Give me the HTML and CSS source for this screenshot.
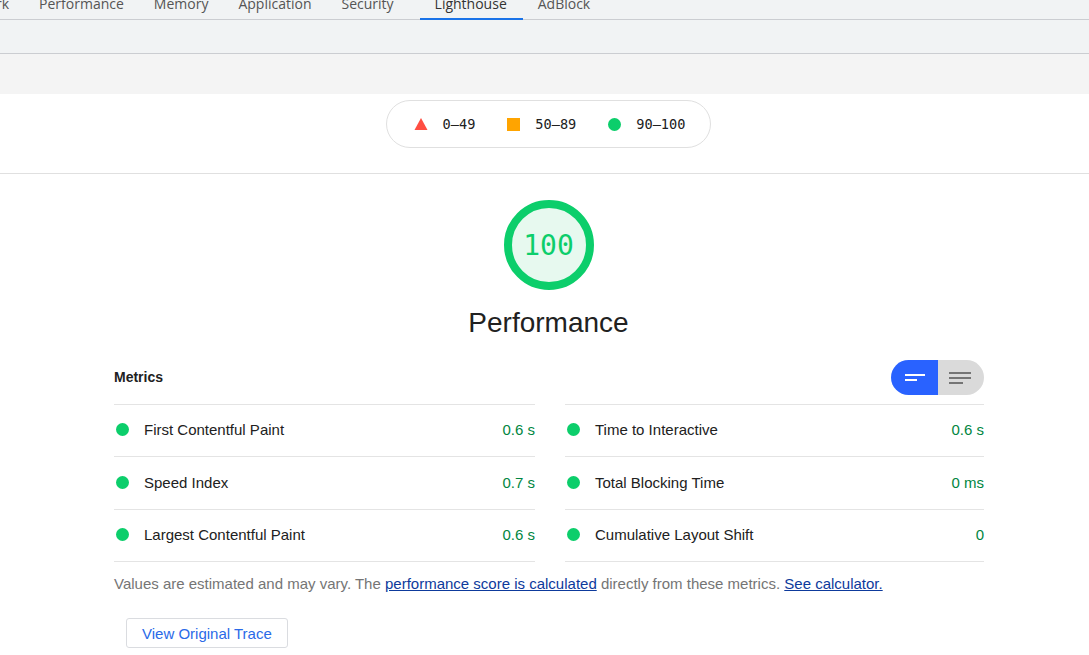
FILE: index.html
```html
<!DOCTYPE html>
<html>
<head>
<meta charset="utf-8">
<link rel="stylesheet" href="styles.css">
</head>
<body>
<div class="tabbar">
  <div class="tab tab-cut">rk</div>
  <div class="tab">Performance</div>
  <div class="tab">Memory</div>
  <div class="tab">Application</div>
  <div class="tab">Security</div>
  <div class="tab active">Lighthouse</div>
  <div class="tab">AdBlock</div>
</div>
<div class="toolbar"></div>
<div class="topgray"></div>
<div class="content">
  <div class="legend-wrap">
    <div class="legend">
      <span class="leg"><svg class="leg-icon" width="14" height="14" viewBox="0 0 14 14"><polygon points="7,1 13.5,13 0.5,13" fill="#ff4e42"/></svg><span class="leg-text">0–49</span></span>
      <span class="leg"><span class="sq"></span><span class="leg-text">50–89</span></span>
      <span class="leg"><span class="dot-big"></span><span class="leg-text">90–100</span></span>
    </div>
  </div>
  <div class="divider"></div>
  <div class="gauge-wrap">
    <div class="gauge"><span class="gauge-num">100</span></div>
    <div class="gauge-label">Performance</div>
  </div>
  <div class="metrics">
    <div class="metrics-head">
      <div class="metrics-title">Metrics</div>
      <div class="toggle">
        <div class="toggle-on">
          <svg width="22" height="12" viewBox="0 0 22 12"><rect x="1" y="2" width="20" height="2" fill="#fff"/><rect x="1" y="7" width="12" height="2" fill="#fff"/></svg>
        </div>
        <div class="toggle-off">
          <svg width="24" height="16" viewBox="0 0 24 16"><rect x="1" y="2" width="22" height="2" fill="#757575"/><rect x="1" y="7" width="22" height="2" fill="#757575"/><rect x="1" y="12" width="14" height="2" fill="#757575"/></svg>
        </div>
      </div>
    </div>
    <div class="grid">
      <div class="col">
        <div class="row"><span class="dot"></span><span class="name">First Contentful Paint</span><span class="val">0.6 s</span></div>
        <div class="row"><span class="dot"></span><span class="name">Speed Index</span><span class="val">0.7 s</span></div>
        <div class="row"><span class="dot"></span><span class="name">Largest Contentful Paint</span><span class="val">0.6 s</span></div>
      </div>
      <div class="col">
        <div class="row"><span class="dot"></span><span class="name">Time to Interactive</span><span class="val">0.6 s</span></div>
        <div class="row"><span class="dot"></span><span class="name">Total Blocking Time</span><span class="val">0 ms</span></div>
        <div class="row"><span class="dot"></span><span class="name">Cumulative Layout Shift</span><span class="val">0</span></div>
      </div>
    </div>
    <p class="note">Values are estimated and may vary. The <a href="#">performance score is calculated</a> directly from these metrics. <a href="#">See calculator.</a></p>
    <button class="trace">View Original Trace</button>
  </div>
</div>
</body>
</html>
```
FILE: styles.css
```css
html, body {
  margin: 0;
  padding: 0;
  background: #fff;
  font-family: "Liberation Sans", Arial, sans-serif;
  overflow: hidden;
}
.tabbar {
  display: flex;
  height: 30px;
  margin-top: -11px;
  background: #f1f3f4;
  border-bottom: 1px solid #cbcdd1;
  font-family: "Open Sans", "Noto Sans", sans-serif;
  font-size: 14px;
  color: #555;
}
.tab {
  position: relative;
  padding: 0 15px;
  line-height: 30px;
  white-space: nowrap;
}
.tab-cut {
  margin-left: -4px;
  padding-left: 0;
}
.tab.active {
  margin-left: 11px;
  padding-right: 16px;
  color: #333;
}
.tab.active::after {
  content: "";
  position: absolute;
  left: 0;
  right: 0;
  bottom: -1px;
  height: 2px;
  background: #1a73e8;
}
.toolbar {
  height: 33px;
  background: #f1f3f4;
  border-bottom: 1px solid #cbcdd1;
}
.topgray {
  height: 40px;
  background: #f4f4f4;
}
.content {
  background: #fff;
}
.legend-wrap {
  display: flex;
  justify-content: center;
  padding-top: 6px;
  padding-left: 8px;
}
.legend {
  display: flex;
  align-items: center;
  gap: 32px;
  height: 46px;
  padding: 0 25px 0 27px;
  border: 1px solid #e0e0e0;
  border-radius: 24px;
  font-family: "DejaVu Sans Mono", "Liberation Mono", monospace;
  font-size: 13.6px;
  color: #212121;
}
.leg {
  display: flex;
  align-items: center;
  gap: 15px;
}
.leg-icon { display: block; }
.sq {
  width: 13px;
  height: 13px;
  background: #ffa400;
}
.dot-big {
  width: 13px;
  height: 13px;
  border-radius: 50%;
  background: #0cce6b;
}
.divider {
  height: 1px;
  background: #e0e0e0;
  margin-top: 25px;
}
.gauge-wrap {
  display: flex;
  flex-direction: column;
  align-items: center;
  padding-top: 26px;
  padding-left: 8px;
}
.gauge {
  box-sizing: border-box;
  width: 90px;
  height: 90px;
  border-radius: 50%;
  border: 8px solid #0cce6b;
  background: #e7f9ef;
  display: flex;
  align-items: center;
  justify-content: center;
}
.gauge-num {
  font-family: "DejaVu Sans Mono", "Liberation Mono", monospace;
  font-size: 28px;
  color: #0cce6b;
}
.gauge-label {
  margin-top: 16px;
  font-size: 28px;
  color: #212121;
  line-height: 34px;
}
.metrics {
  margin: 20px 105px 0 114px;
}
.metrics-head {
  display: flex;
  align-items: center;
  justify-content: space-between;
  height: 35px;
  padding-bottom: 9px;
}
.metrics-title {
  font-weight: bold;
  font-size: 14px;
  color: #212121;
  margin-top: -2px;
}
.toggle {
  display: flex;
  height: 35px;
  width: 93px;
  border-radius: 18px;
  overflow: hidden;
}
.toggle-on {
  flex: 1;
  background: #2962ff;
  display: flex;
  align-items: center;
  justify-content: center;
  padding-left: 2px;
}
.toggle-off {
  flex: 1;
  background: #dadada;
  display: flex;
  align-items: center;
  justify-content: center;
  padding-right: 2px;
}
.grid {
  display: grid;
  grid-template-columns: 421px 419px;
  column-gap: 30px;
}
.row {
  box-sizing: border-box;
  display: flex;
  align-items: center;
  height: 52px;
  padding-bottom: 3px;
  border-top: 1px solid #e4e4e4;
  font-size: 15px;
  color: #212121;
}
.row:nth-child(2) {
  height: 53px;
  padding-bottom: 1px;
}
.row:last-child {
  height: 53px;
  padding-bottom: 2px;
  border-bottom: 1px solid #e4e4e4;
}
.dot {
  width: 13px;
  height: 13px;
  border-radius: 50%;
  background: #0cce6b;
  margin-left: 2px;
  margin-right: 15px;
}
.name { flex: 1; }
.val {
  color: #018642;
}
.note {
  margin: 12px 0 0;
  font-size: 15px;
  color: #757575;
  line-height: 20px;
}
.note a {
  color: #0d3a9c;
}
.trace {
  margin: 24px 0 0 12px;
  height: 30px;
  padding: 0 15px;
  background: #fff;
  border: 1px solid #dadce0;
  border-radius: 3px;
  font-family: "Liberation Sans", Arial, sans-serif;
  font-size: 15px;
  color: #2a6ae8;
}
```
